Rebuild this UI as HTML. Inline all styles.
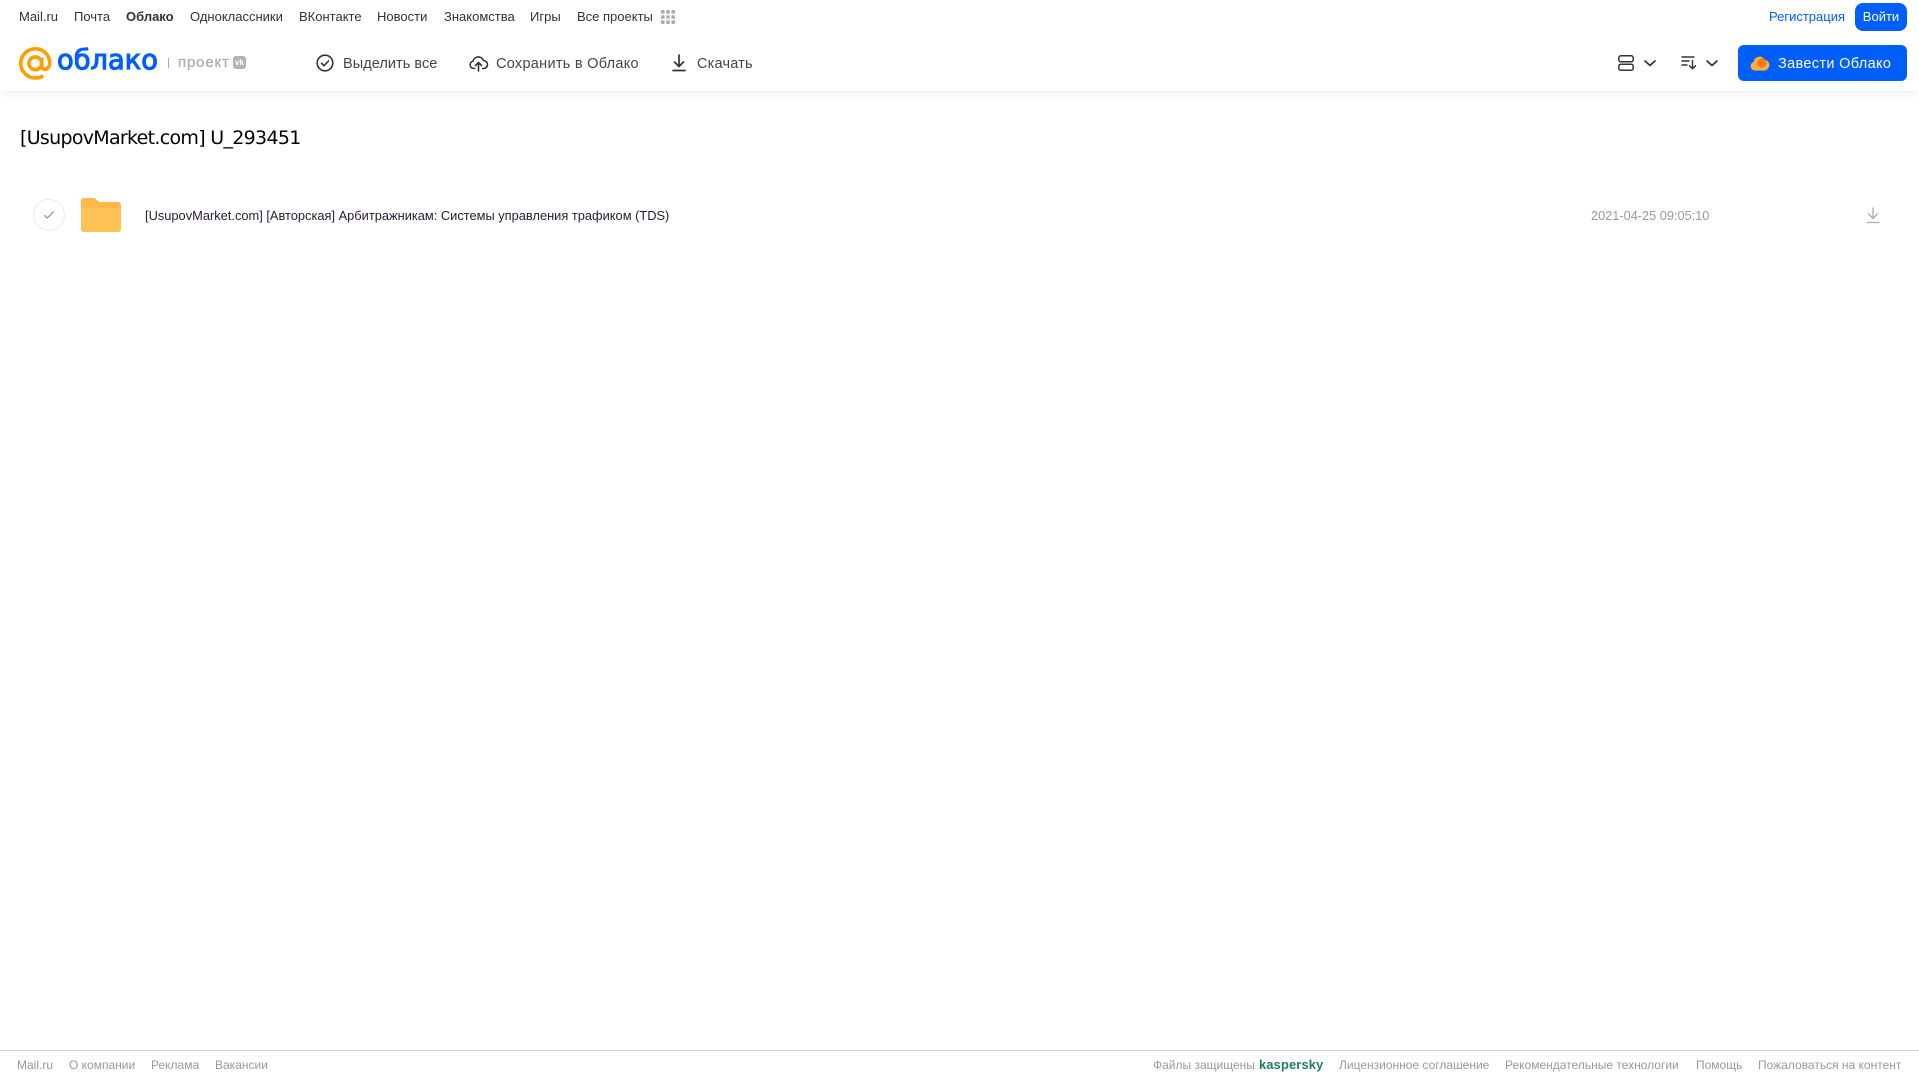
<!DOCTYPE html>
<html lang="ru"><head><meta charset="utf-8"><title>Облако</title>
<style>
html,body{margin:0;padding:0;background:#fff}
body{width:1919px;height:1079px;position:relative;overflow:hidden;font-family:"Liberation Sans",Arial,sans-serif}
.t{position:absolute;white-space:nowrap;line-height:20px;height:20px}
.n{top:7px;font-size:13px;color:#333}
.b{top:54px;font-size:14.5px;color:#444;letter-spacing:.28px}
.f{top:1055px;font-size:12px;color:#999}
svg{position:absolute;overflow:visible}
</style></head><body>
<div style="position:absolute;left:0;top:0;width:1919px;height:91px;background:#fff;box-shadow:0 2px 8px rgba(0,0,0,.08)"></div>

<span class="t n" style="left:19px">Mail.ru</span>
<span class="t n" style="left:74px">Почта</span>
<span class="t n" style="left:126px;font-weight:bold">Облако</span>
<span class="t n" style="left:190px">Одноклассники</span>
<span class="t n" style="left:299px">ВКонтакте</span>
<span class="t n" style="left:377px">Новости</span>
<span class="t n" style="left:444px">Знакомства</span>
<span class="t n" style="left:530px">Игры</span>
<span class="t n" style="left:577px">Все проекты</span>
<svg style="left:661px;top:10px" width="14" height="14" fill="#aaa"><rect x="0" y="0" width="3.6" height="3.6" rx="1"/><rect x="5.2" y="0" width="3.6" height="3.6" rx="1"/><rect x="10.4" y="0" width="3.6" height="3.6" rx="1"/><rect x="0" y="5.2" width="3.6" height="3.6" rx="1"/><rect x="5.2" y="5.2" width="3.6" height="3.6" rx="1"/><rect x="10.4" y="5.2" width="3.6" height="3.6" rx="1"/><rect x="0" y="10.4" width="3.6" height="3.6" rx="1"/><rect x="5.2" y="10.4" width="3.6" height="3.6" rx="1"/><rect x="10.4" y="10.4" width="3.6" height="3.6" rx="1"/></svg>

<span class="t n" style="left:1769px;color:#005ff9">Регистрация</span>
<div style="position:absolute;left:1855px;top:3px;width:52px;height:28px;border-radius:8px;background:#005ff9;color:#fff;font-size:13px;line-height:28px;text-align:center">Войти</div>

<!-- logo -->
<svg style="left:19px;top:47px" width="33" height="33" viewBox="0 0 33 33" fill="none" stroke="#ff9e00" stroke-width="3.6"><circle cx="16.3" cy="16.3" r="6.4"/><path d="M22.7 10.5v8.3c0 2.2 1.3 3.5 3.1 3.5 2.6 0 4.9-2.300 4.900-6.300C30.700 8 24.300 1.800 16.400 1.800 8.300 1.800 1.800 8.300 1.800 16.400S8.300 31 16.400 31c3 0 5.400-.7 7.800-2.200"/></svg>
<span class="t" style="left:57px;top:45px;height:32px;line-height:32px;font-size:27.3px;color:#005ff9;font-family:'DejaVu Sans',sans-serif;-webkit-text-stroke:1.1px #005ff9">облако</span>
<div style="position:absolute;left:168px;top:58px;width:1px;height:10px;background:#aaa"></div>
<span class="t" style="left:178px;top:53px;font-size:15px;color:#aeaeae;letter-spacing:.85px;-webkit-text-stroke:.3px #aeaeae">проект</span>
<div style="position:absolute;left:233px;top:56px;width:13px;height:13px;border-radius:3px;background:#b4b4b4;color:#fff;font-size:8px;font-weight:bold;line-height:13px;text-align:center">vk</div>

<!-- toolbar -->
<svg style="left:316px;top:54px" width="18" height="18" fill="none" stroke="#333" stroke-width="1.6"><circle cx="9" cy="9" r="7.800"/><path d="M5.500 9.200l2.500 2.500 4.500-4.700" stroke-linecap="round" stroke-linejoin="round"/></svg>
<span class="t b" style="left:343px;letter-spacing:.05px">Выделить все</span>
<svg style="left:469px;top:54px" width="19" height="18" fill="none" stroke="#333" stroke-width="1.600" stroke-linecap="round" stroke-linejoin="round"><path d="M5.500 14.500H4.800A3.700 3.700 0 0 1 4 7.200 5.500 5.500 0 0 1 14.500 6.500a4 4 0 0 1 0 8h-.8"/><path d="M9.500 17V9M6.500 11.500l3-3 3 3"/></svg>
<span class="t b" style="left:496px">Сохранить в Облако</span>
<svg style="left:672px;top:54px" width="14" height="18" fill="none" stroke="#333" stroke-width="1.700" stroke-linecap="round" stroke-linejoin="round"><path d="M7 1v11M2.500 8L7 12.500 11.500 8M1 16.500h12"/></svg>
<span class="t b" style="left:697px;letter-spacing:.2px">Скачать</span>

<svg style="left:1618px;top:55px" width="16" height="16" fill="none" stroke="#333" stroke-width="1.500"><rect x=".8" y=".8" width="14.400" height="6" rx="2"/><rect x=".8" y="9.200" width="14.400" height="6" rx="2"/></svg>
<svg style="left:1644px;top:60px" width="12" height="7" fill="none" stroke="#333" stroke-width="1.700" stroke-linecap="round" stroke-linejoin="round"><path d="M1 1l5 4.500L11 1"/></svg>
<svg style="left:1681px;top:56px" width="16" height="14" fill="none" stroke="#333" stroke-width="1.400" stroke-linecap="round" stroke-linejoin="round"><path d="M1 1h12M1 5h7M1 9h5M11.500 4.500V12.500M8.500 9.800l3 3 3-3"/></svg>
<svg style="left:1706px;top:60px" width="12" height="7" fill="none" stroke="#333" stroke-width="1.700" stroke-linecap="round" stroke-linejoin="round"><path d="M1 1l5 4.500L11 1"/></svg>

<div style="position:absolute;left:1738px;top:45px;width:169px;height:36px;border-radius:6px;background:#005ff9"></div>
<svg style="left:1750px;top:54px" width="20" height="17"><path d="M5 16.500A4.500 4.500 0 0 1 3.800 7.700 5.800 5.800 0 0 1 14.500 5.500a5.600 5.600 0 0 1 .5 11z" fill="#ffb13d"/><circle cx="12" cy="9" r="4.800" fill="#ff7a1a"/></svg>
<span class="t b" style="left:1778px;color:#fff;letter-spacing:.34px">Завести Облако</span>

<!-- title -->
<span class="t" style="left:20px;top:126px;height:24px;line-height:24px;font-size:19px;color:#000;font-family:'DejaVu Sans','Liberation Sans',sans-serif;letter-spacing:-.7px">[UsupovMarket.com] U_293451</span>

<!-- row -->
<div style="position:absolute;left:33px;top:199px;width:30px;height:30px;border:1px solid #ececec;border-radius:50%"></div>
<svg style="left:43px;top:210px" width="12" height="10" fill="none" stroke="#999" stroke-width="1.300" stroke-linecap="round" stroke-linejoin="round"><path d="M1.500 5.500l2.800 2.500 6-6"/></svg>
<svg style="left:81px;top:198px" width="40" height="34"><path d="M0 3a3 3 0 0 1 3-3h8.500c2.500 0 3.500 1 5 2.500S19 4 21 4h16a3 3 0 0 1 3 3v24a3 3 0 0 1-3 3H3a3 3 0 0 1-3-3z" fill="#ffb84a"/><path d="M0 10h40v21a3 3 0 0 1-3 3H3a3 3 0 0 1-3-3z" fill="#ffc255"/></svg>
<span class="t" style="left:145px;top:206px;font-size:12.85px;color:#2a1a33">[UsupovMarket.com] [Авторская] Арбитражникам: Системы управления трафиком (TDS)</span>
<span class="t" style="left:1591px;top:206px;font-size:12.75px;color:#999">2021-04-25 09:05:10</span>
<svg style="left:1866px;top:207px" width="14" height="17" fill="none" stroke="#aaa" stroke-width="1.300" stroke-linecap="round" stroke-linejoin="round"><path d="M7 1v10.500M2.500 7L7 11.500 11.500 7M1 15.500h12"/></svg>

<!-- footer -->
<div style="position:absolute;left:0;top:1050px;width:1919px;height:1px;background:#d8d8d8"></div>
<span class="t f" style="left:17px">Mail.ru</span>
<span class="t f" style="left:69px">О компании</span>
<span class="t f" style="left:151px">Реклама</span>
<span class="t f" style="left:215px">Вакансии</span>
<span class="t f" style="left:1153px">Файлы защищены</span>
<span class="t f" style="left:1259px;color:#1a7f64;font-weight:bold;font-size:12.8px;letter-spacing:.2px">kaspersky</span>
<span class="t f" style="left:1339px">Лицензионное соглашение</span>
<span class="t f" style="left:1505px">Рекомендательные технологии</span>
<span class="t f" style="left:1696px">Помощь</span>
<span class="t f" style="left:1758px">Пожаловаться на контент</span>
</body></html>
